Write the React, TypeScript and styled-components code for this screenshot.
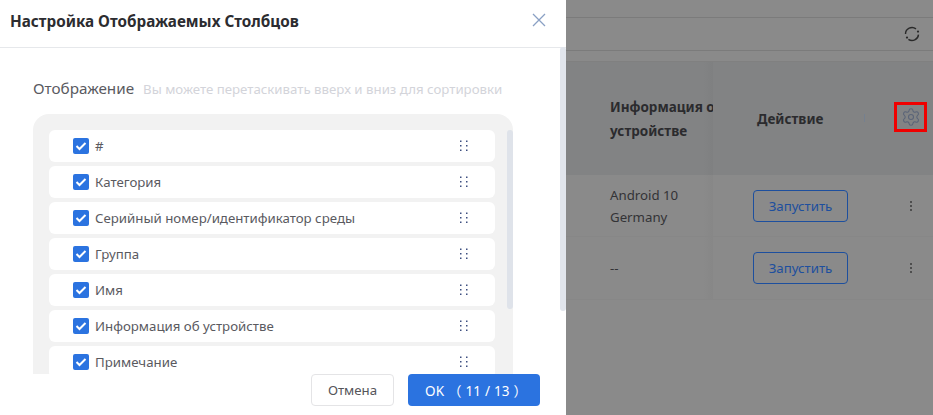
import React from "react";
import styled, { createGlobalStyle } from "styled-components";
import { Settings } from "lucide-react";

const Global = createGlobalStyle`
  html, body { margin: 0; padding: 0; background: #8a8a8a; }
  body { font-family: "Noto Sans", "Open Sans", sans-serif; overflow: hidden; }
  * { box-sizing: border-box; }
`;

const Page = styled.div`
  display: flex;
  width: 933px;
  height: 415px;
  overflow: hidden;
`;

const Drawer = styled.aside`
  position: relative;
  flex: 0 0 566px;
  height: 415px;
  display: flex;
  flex-direction: column;
  background: #fff;
`;

const DrawerHeader = styled.header`
  flex: 0 0 48px;
  display: flex;
  align-items: center;
  justify-content: space-between;
  padding: 0 20px 6px 10px;
  border-bottom: 1px solid #e6e8eb;
`;

const DrawerTitle = styled.h1`
  margin: 0;
  font-size: 15.25px;
  line-height: 20px;
  font-weight: 700;
  color: #2c2c30;
`;

const CloseIcon = styled.svg`
  width: 14px;
  height: 14px;
  display: block;
  margin-bottom: 2px;
  color: #8aa0c4;
`;

const DrawerBody = styled.div`
  flex: 1;
  min-height: 0;
  overflow: hidden;
  padding: 28px 53px 0 33px;
`;

const SectionHead = styled.div`
  display: flex;
  align-items: baseline;
  gap: 9px;
  height: 24px;
  line-height: 24px;
  margin-bottom: 14px;
`;

const SectionLabel = styled.span`
  font-size: 15.25px;
  color: #5a5a5f;
`;

const SectionHint = styled.span`
  font-size: 13.25px;
  color: #d3d4da;
  white-space: nowrap;
`;

const ListPanel = styled.div`
  position: relative;
  background: #f2f2f2;
  border-radius: 16px 16px 0 0;
  padding: 16px 18px 16px 16px;
  display: flex;
  flex-direction: column;
  gap: 4px;
  height: 400px;
`;

const ColumnRow = styled.div`
  flex: 0 0 32px;
  display: flex;
  align-items: center;
  gap: 6px;
  padding: 0 27px 0 24px;
  background: #fff;
  border-radius: 6px;
`;

const Check = styled.span`
  flex: 0 0 16px;
  width: 16px;
  height: 16px;
  border-radius: 2px;
  background: #2b73e0;
  display: flex;
  align-items: center;
  justify-content: center;
`;

const RowText = styled.span`
  flex: 1;
  font-size: 13.25px;
  color: #5a5a5f;
  white-space: nowrap;
`;

const Grip = styled.svg`
  width: 9px;
  height: 12px;
  display: block;
  color: #3d4f80;
`;

const InnerScroll = styled.div`
  position: absolute;
  right: 0;
  top: 16px;
  width: 6px;
  height: 179px;
  background: #dfe3ea;
  border-radius: 3px;
`;

const OuterScroll = styled.div`
  position: absolute;
  left: 560px;
  top: 47px;
  width: 6px;
  height: 264px;
  background: #e1e5ec;
  border-radius: 3px;
`;

const DrawerFooter = styled.footer`
  flex: 0 0 41px;
  display: flex;
  justify-content: flex-end;
  align-items: flex-start;
  gap: 14px;
  padding-right: 26px;
  background: #fff;
`;

const CancelButton = styled.button`
  width: 83px;
  height: 32px;
  border: 1px solid #e4e4e6;
  border-radius: 4px;
  background: #fff;
  color: #55555a;
  font: 13.25px "Noto Sans", sans-serif;
`;

const OkButton = styled.button`
  width: 132px;
  height: 32px;
  border: 0;
  border-radius: 4px;
  background: #2b73e0;
  color: #fff;
  text-align: left;
  padding: 0 0 0 17px;
  font: 13.5px "Noto Sans", "Noto Sans CJK SC", sans-serif;
  letter-spacing: 0.2px;
  white-space: pre;
`;

const Backdrop = styled.main`
  flex: 1;
  min-width: 0;
  background: #8a8a8a;
  display: flex;
  flex-direction: column;
`;

const TopStrip = styled.div`
  flex: 0 0 18px;
  border-bottom: 1px solid #7b7b7b;
`;

const ToolBar = styled.div`
  flex: 0 0 33px;
  display: flex;
  align-items: center;
  justify-content: flex-end;
  padding-right: 13px;
  border-bottom: 1px solid #7b7b7b;
  color: #2a2a2a;
`;

const Spacer = styled.div`
  flex: 0 0 11px;
  border-bottom: 1px solid #808080;
`;

const Grid = styled.div`
  display: grid;
  grid-template-columns: 147px 220px;
`;

const LeftHead = styled.div`
  height: 113px;
  background: linear-gradient(to right, #828384 0, #828384 137px, #7f8081 147px);
  padding-left: 44px;
  display: flex;
  align-items: center;
  font-size: 13.5px;
  line-height: 24px;
  font-weight: 700;
  color: #2b2b2e;
  overflow: hidden;
  white-space: nowrap;
`;

const ActionHead = styled.div`
  position: relative;
  height: 113px;
  background: #828384;
  display: flex;
  align-items: center;
  padding-left: 44px;
  font-size: 13.5px;
  font-weight: 700;
  color: #2b2b2e;
`;

const HeadDivider = styled.span`
  position: absolute;
  left: 151px;
  top: 52px;
  width: 1px;
  height: 8px;
  background: #75808f;
`;

const GearFrame = styled.div`
  position: absolute;
  left: 181px;
  top: 40px;
  width: 33px;
  height: 30px;
  border: 3px solid #f00000;
  display: flex;
  align-items: center;
  justify-content: center;
  color: #5a6478;
`;

const InfoCell = styled.div<{ $height: number }>`
  height: ${(p) => p.$height}px;
  background: linear-gradient(to right, #8a8a8a 0, #8a8a8a 137px, #878787 147px);
  padding-left: 44px;
  display: flex;
  flex-direction: column;
  justify-content: center;
  font-size: 13.25px;
  line-height: 22px;
  color: #333336;
  border-bottom: 1px solid #878787;
`;

const ActionCell = styled.div<{ $height: number }>`
  height: ${(p) => p.$height}px;
  background: #8a8a8a;
  display: flex;
  align-items: center;
  justify-content: space-between;
  padding: 0 20px 0 40px;
  border-bottom: 1px solid #878787;
`;

const RunButton = styled.button`
  width: 95px;
  height: 32px;
  border: 1px solid #1d4f9e;
  border-radius: 4px;
  background: transparent;
  color: #1d4f9e;
  font: 13.25px "Noto Sans", sans-serif;
`;

const MoreIcon = styled.svg`
  width: 4px;
  height: 12px;
  display: block;
  color: #3a3a3a;
`;

const RefreshIcon = styled.svg`
  width: 16px;
  height: 16px;
  display: block;
`;

const columns = [
  "#",
  "Категория",
  "Серийный номер/идентификатор среды",
  "Группа",
  "Имя",
  "Информация об устройстве",
  "Примечание",
];

const GripDots = () => (
  <Grip viewBox="0 0 9 12" fill="currentColor">
    {[0, 4.5, 9].map((y) =>
      [1, 7].map((x) => <rect key={`${x}-${y}`} x={x} y={y + 0.5} width="1.5" height="1.5" />)
    )}
  </Grip>
);

const More = () => (
  <MoreIcon viewBox="0 0 4 12" fill="currentColor">
    <circle cx="2" cy="2" r="1" />
    <circle cx="2" cy="6" r="1" />
    <circle cx="2" cy="10" r="1" />
  </MoreIcon>
);

export default function App() {
  return (
    <Page>
      <Global />
      <Drawer>
        <DrawerHeader>
          <DrawerTitle>Настройка Отображаемых Столбцов</DrawerTitle>
          <CloseIcon viewBox="0 0 14 14" fill="none" stroke="currentColor" strokeWidth="1.3">
            <path d="M1 1l12 12M13 1L1 13" />
          </CloseIcon>
        </DrawerHeader>
        <OuterScroll />
        <DrawerBody>
          <SectionHead>
            <SectionLabel>Отображение</SectionLabel>
            <SectionHint>Вы можете перетаскивать вверх и вниз для сортировки</SectionHint>
          </SectionHead>
          <ListPanel>
            <InnerScroll />
            {columns.map((c) => (
              <ColumnRow key={c}>
                <Check>
                  <svg width="12" height="10" viewBox="0 0 12 10" fill="none" stroke="#fff" strokeWidth="2">
                    <path d="M1.5 5l3 3 6-6" />
                  </svg>
                </Check>
                <RowText>{c}</RowText>
                <GripDots />
              </ColumnRow>
            ))}
          </ListPanel>
        </DrawerBody>
        <DrawerFooter>
          <CancelButton>Отмена</CancelButton>
          <OkButton>{"OK （ 11 / 13 ）"}</OkButton>
        </DrawerFooter>
      </Drawer>
      <Backdrop>
        <TopStrip />
        <ToolBar>
          <RefreshIcon viewBox="0 0 16 16" fill="none" stroke="currentColor" strokeWidth="1.4">
            <path d="M1.5 8A6.5 6.5 0 0 1 12 2.9" />
            <path d="M14.5 8.6A6.5 6.5 0 0 1 4.4 13.4" />
            <circle cx="14" cy="5.6" r="1.1" fill="currentColor" stroke="none" />
            <circle cx="3" cy="11.6" r="1.1" fill="currentColor" stroke="none" />
          </RefreshIcon>
        </ToolBar>
        <Spacer />
        <Grid>
          <LeftHead>
            <span>
              Информация о
              <br />
              устройстве
            </span>
          </LeftHead>
          <ActionHead>
            Действие
            <HeadDivider />
            <GearFrame>
              <Settings size={20} strokeWidth={1.3} />
            </GearFrame>
          </ActionHead>
          <InfoCell $height={62}>
            <span>Android 10</span>
            <span>Germany</span>
          </InfoCell>
          <ActionCell $height={62}>
            <RunButton>Запустить</RunButton>
            <More />
          </ActionCell>
          <InfoCell $height={63}>
            <span>--</span>
          </InfoCell>
          <ActionCell $height={63}>
            <RunButton>Запустить</RunButton>
            <More />
          </ActionCell>
        </Grid>
      </Backdrop>
    </Page>
  );
}
